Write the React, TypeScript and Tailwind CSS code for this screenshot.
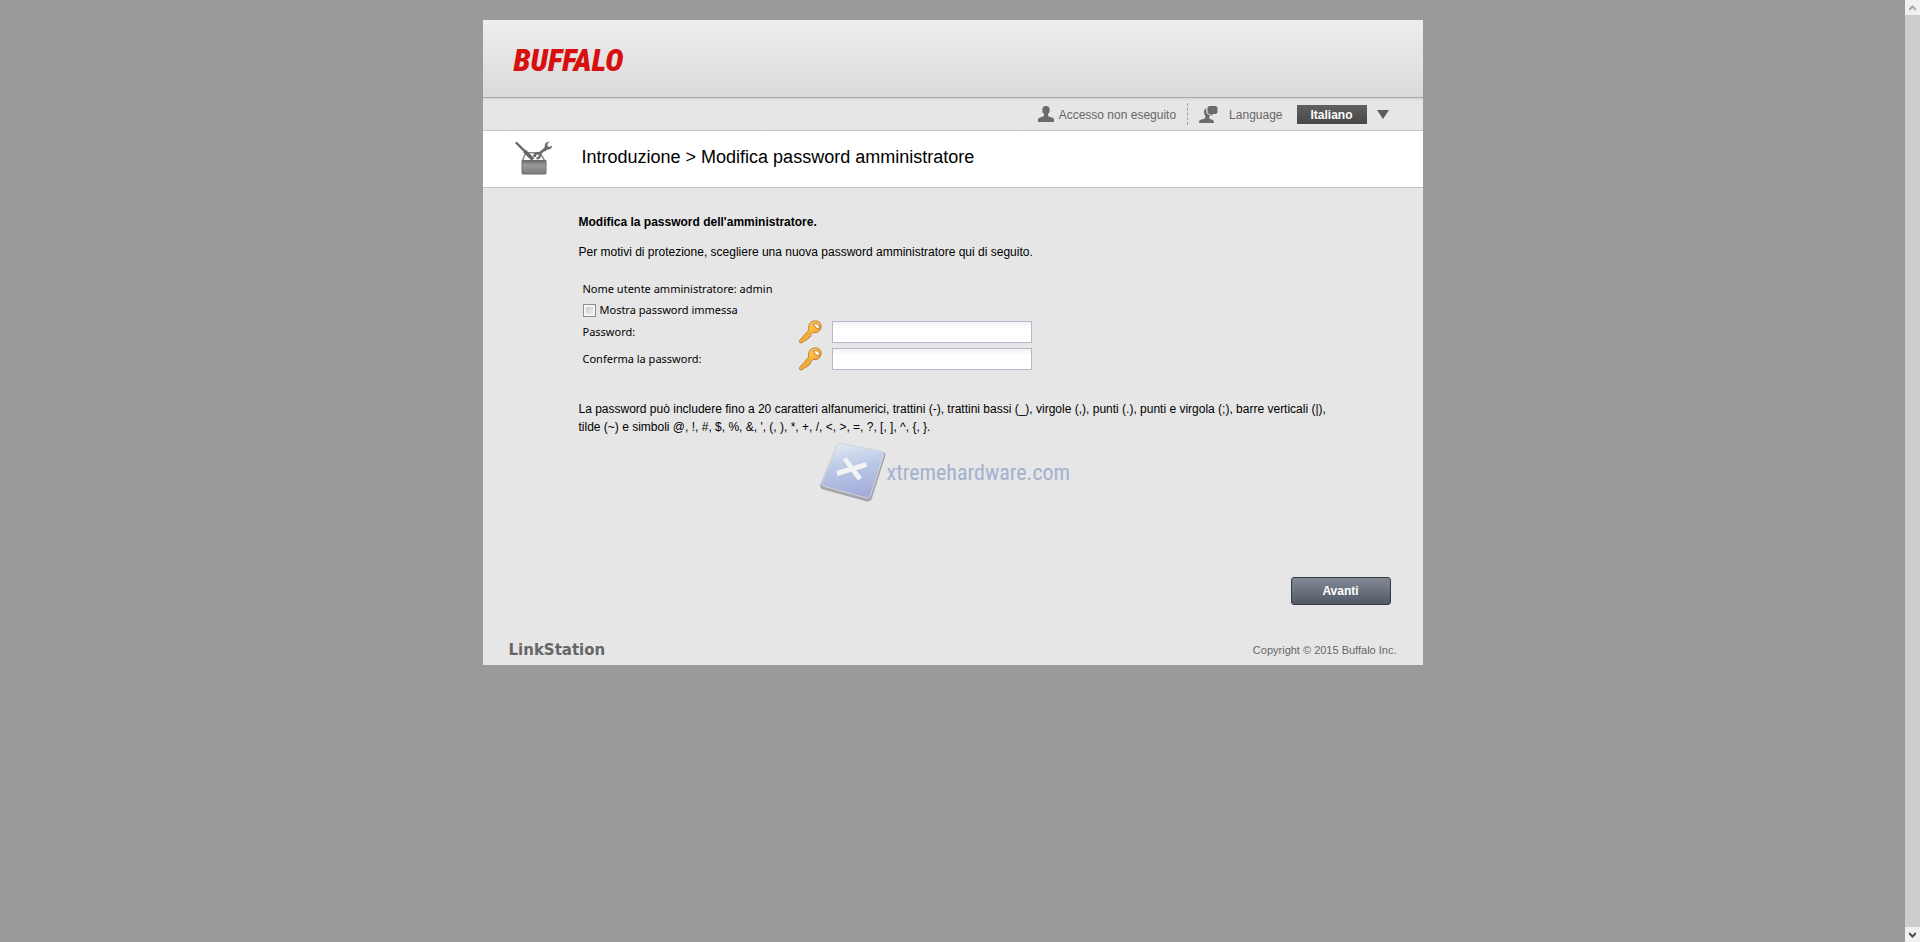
import { useState } from "react";

const languages = ["Italiano", "English", "Deutsch", "Français", "Español"];

const passwordHint =
  "La password può includere fino a 20 caratteri alfanumerici, trattini (-), trattini bassi (_), virgole (,), punti (.), punti e virgola (;), barre verticali (|), tilde (~) e simboli @, !, #, $, %, &, ', (, ), *, +, /, <, >, =, ?, [, ], ^, {, }.";

function UserIcon() {
  return (
    <svg width="16" height="16" viewBox="0 0 16 16" fill="#6b6b6b" aria-hidden="true">
      <path d="M8 0C5.600 0 4.300 1.500 4.300 3.800c0 1.900.5 3.200 1.700 4.300v1.400c0 .6-.4.900-1 1.100L1.500 11.700C.5 12.100 0 12.700 0 13.700V16h16v-2.300c0-1-.5-1.600-1.500-2L11 10.600c-.6-.2-1-.5-1-1.100V8.100c1.200-1.100 1.700-2.400 1.700-4.300C11.700 1.500 10.400 0 8 0z" />
    </svg>
  );
}

function LanguageIcon() {
  return (
    <svg width="19" height="17" viewBox="0 0 19 17" fill="#6b6b6b" aria-hidden="true">
      <path d="M10 0h7l1.500 1.500v5L17 8h-3l-2 2-.5-2H10L8.500 6.500v-5z" />
      <path d="M7.300 2.200C5.300 3 4.800 4.600 5 6.600c.1 1.500.6 2.700 1.400 3.700 0 1.400-.2 2-1.200 2.400l-3.600 1.100C.5 14.200 0 14.800 0 17h15c0-2-.5-2.700-1.500-3.100l-2.300-.9c-.8-.3-1-.8-.8-1.900l.5-2.300C8.500 8.700 7.200 7.300 7.200 5z" />
    </svg>
  );
}

function ToolboxIcon() {
  return (
    <svg width="38" height="34" viewBox="0 0 38 34" aria-hidden="true">
      <defs>
        <linearGradient id="box" x1="0" y1="0" x2="0" y2="1">
          <stop offset="0" stopColor="#6c6c6c" />
          <stop offset=".35" stopColor="#999" />
          <stop offset="1" stopColor="#7c7c7c" />
        </linearGradient>
      </defs>
      <path d="M7.500 19.500l2.500-6c.5-1.200 1-1.700 2-1.700h12c1 0 1.500.5 2 1.700l3.500 6" fill="none" stroke="#8a8a8a" strokeWidth="1.500" />
      <path d="M1.500 2l9 9" stroke="#666" strokeWidth="2.400" strokeLinecap="round" />
      <path d="M9.500 10l8.500 8.500" stroke="#666" strokeWidth="3.800" />
      <path d="M19.500 16c0-3 2-4.500 5-3.500l5-4" fill="none" stroke="#6c6c6c" strokeWidth="2.800" />
      <path d="M34.500.8c-3.500 0-5.200 2.200-4.600 5l-2 2.500 2.200 2.200 2.300-1.900c2.500.4 4.400-1.100 4.900-4.300L34.600 6 32.400 5l.2-2.200z" fill="#6c6c6c" />
      <path d="M24.500 12.500c1.500 2.500 0 4.500-3 5" fill="none" stroke="#6c6c6c" strokeWidth="2.400" />
      <path d="M7 19.500h24V32c0 .8-.4 1-1 1H8c-.6 0-1-.2-1-1z" fill="url(#box)" stroke="#6c6c6c" />
    </svg>
  );
}

function KeyIcon() {
  return (
    <svg width="24" height="24" viewBox="0 0 24 24" aria-hidden="true">
      <defs>
        <linearGradient id="gold" x1="0" y1="0" x2="1" y2="1">
          <stop offset="0" stopColor="#ffdc86" />
          <stop offset=".5" stopColor="#fbb93f" />
          <stop offset="1" stopColor="#e58f1c" />
        </linearGradient>
      </defs>
      <path
        d="M12.500 1.800C14.500.6 18.500.5 20.500 2.300c2 1.900 2.100 5.200.6 7.600-1.500 2.300-4.400 3.300-7.100 2.500L11.600 15l.1 1.500-1.700.2-.2 1.700-1.700.1-.3 1.600-1.600.2L2.800 23 .8 22.600l-.3-2.100 9.200-10.400C8.900 7 10 3.400 12.500 1.800z"
        fill="url(#gold)"
        stroke="#c4802e"
      />
      <path d="M2 21.500l9.500-10.500" stroke="#d99434" />
      <path d="M14 3.800h4l2.200 2v3.400l-3-1.200z" fill="#fff" stroke="#c4802e" />
    </svg>
  );
}

function WatermarkIcon() {
  return (
    <svg width="68" height="62" viewBox="0 0 68 62" aria-hidden="true">
      <defs>
        <linearGradient id="tile" x1=".3" y1="0" x2=".5" y2="1">
          <stop offset="0" stopColor="#e0e8f2" />
          <stop offset=".45" stopColor="#b9c8e6" />
          <stop offset="1" stopColor="#a3aada" />
        </linearGradient>
      </defs>
      <path d="M23 2.500l40 8c3 .7 4 2.500 3.200 5L53 57c-1 3-3 4-6 3.300L4.500 48.500C1.500 47.500.5 46 1.500 43L17 6c1-2.800 3-4 6-3.500z" fill="#a4a6ab" />
      <path d="M22.500 2.500l39 7.500c2.500.6 3.700 2 3 4.500L51.500 54c-.8 2.400-2.500 3.300-5 2.700L5.500 45.500c-2.500-.8-3.500-2.200-2.600-4.500L17.500 5.500c.9-2.300 2.700-3.400 5-3z" fill="url(#tile)" stroke="#d2d5da" />
      <path d="M25.500 18.500L41 38.500M18.500 33.500L47.500 24.500" stroke="#b4bdd3" strokeWidth="6" />
      <path d="M25.500 17.500L41 38M18 32.500L47.500 23.500" stroke="#f2f3f6" strokeWidth="5" />
    </svg>
  );
}

type PasswordRowProps = {
  id: string;
  label: string;
  visible: boolean;
};

function PasswordRow({ id, label, visible }: PasswordRowProps) {
  return (
    <div className="flex h-6 items-center">
      <label htmlFor={id} className="w-54">
        {label}
      </label>
      <KeyIcon />
      <input
        id={id}
        type={visible ? "text" : "password"}
        className="ml-[9px] h-[22px] w-50 border border-[#b5b8c8] bg-linear-to-b from-[#f0f1f4] to-white to-30% px-1 outline-none"
      />
    </div>
  );
}

function Scrollbar() {
  return (
    <div className="sticky top-0 flex h-screen w-[15px] shrink-0 flex-col justify-between bg-[#cdcdcd]" aria-hidden="true">
      <div className="flex h-[15px] items-center justify-center bg-[#f1f1f1]">
        <svg width="7" height="6" viewBox="0 0 7 6" fill="none" stroke="#a8a8a8" strokeWidth="2">
          <path d="M0 5l3.500-3.500L7 5" />
        </svg>
      </div>
      <div className="flex h-[15px] items-center justify-center bg-[#f1f1f1]">
        <svg width="7" height="6" viewBox="0 0 7 6" fill="none" stroke="#505050" strokeWidth="2">
          <path d="M0 1l3.500 3.500L7 1" />
        </svg>
      </div>
    </div>
  );
}

export default function App() {
  const [showPassword, setShowPassword] = useState(false);

  return (
    <div className="flex min-h-screen bg-[#9a9a9a] font-['Liberation_Sans',Arial,sans-serif] text-xs text-black">
      <div className="flex-1 pt-5">
        <div className="mx-auto w-full max-w-[940px] bg-[#e6e6e6]">
          <header className="flex h-[78px] items-center border-b border-[#a8a8a8] bg-linear-to-b from-[#eeeeee] to-[#dadada] px-[31px]">
            <div className="pt-1 font-['Roboto_Condensed','Roboto',sans-serif] text-[31px] leading-8 font-black text-[#d7100f] italic">
              BUFFALO
            </div>
          </header>

          <div className="flex h-[33px] items-center justify-end border-b border-[#c4c4c4] bg-linear-to-b from-[#d6d6d6] to-[#e6e6e6] to-10% pr-[34px] text-[#666666]">
            <UserIcon />
            <span className="mr-[11px] ml-[5px] pt-px">Accesso non eseguito</span>
            <div className="mr-[11px] h-[22px] border-l border-dashed border-[#a0a0a0]" />
            <LanguageIcon />
            <label htmlFor="language" className="ml-[11px] pt-px">
              Language
            </label>
            <select
              id="language"
              className="ml-[14px] h-[19px] w-[70px] appearance-none bg-linear-to-b from-[#606060] to-[#484848] pt-px text-center font-bold text-white"
            >
              {languages.map((name) => (
                <option key={name}>{name}</option>
              ))}
            </select>
            <svg className="ml-[10px]" width="12" height="9" viewBox="0 0 12 9" fill="#5c5c5c" aria-hidden="true">
              <path d="M0 0h12L6 9z" />
            </svg>
          </div>

          <div className="flex h-[57px] items-center border-b border-[#c4c4c4] bg-white px-8 pb-0.5">
            <ToolboxIcon />
            <h1 className="ml-[29px] pb-0.5 text-lg leading-6">Introduzione &gt; Modifica password amministratore</h1>
          </div>

          <main className="pt-[25px] pr-8 pl-24 leading-[18px]">
            <h2 className="font-bold">Modifica la password dell'amministratore.</h2>
            <p className="mt-3">Per motivi di protezione, scegliere una nuova password amministratore qui di seguito.</p>

            <form className="mt-[17px] pl-1 font-['Noto_Sans',Tahoma,sans-serif] text-[11px]">
              <div className="flex h-[22px] items-center">Nome utente amministratore: admin</div>
              <label className="flex h-5 items-center gap-1">
                <input
                  type="checkbox"
                  checked={showPassword}
                  onChange={(e) => setShowPassword(e.target.checked)}
                  className="size-[13px] appearance-none border border-[#8e8f8f] bg-linear-to-br from-[#c4c7cc] to-[#f4f4f4] shadow-[inset_0_0_0_2px_#f4f4f4] checked:from-[#4a5f97]"
                />
                Mostra password immessa
              </label>
              <div className="flex flex-col gap-[3px]">
                <PasswordRow id="password" label="Password:" visible={showPassword} />
                <PasswordRow id="confirm" label="Conferma la password:" visible={showPassword} />
              </div>
            </form>

            <p className="mt-[29px] max-w-[765px]">{passwordHint}</p>

            <div className="mt-1 flex h-16 items-center pl-60 font-['Roboto_Condensed','Roboto',sans-serif] text-[22px] text-[#a3b1cf]">
              <WatermarkIcon />
              <span className="pt-0.5">xtremehardware.com</span>
            </div>

            <div className="mt-[73px] flex justify-end">
              <button
                type="button"
                className="h-7 w-25 rounded-[3px] border border-[#373b43] bg-linear-to-b from-[#848b97] to-[#515966] font-bold text-white"
              >
                Avanti
              </button>
            </div>
          </main>

          <footer className="mt-[35px] flex items-center justify-between pr-[26px] pb-[5px] pl-[26px] text-[11px] leading-5 text-[#666666]">
            <div className="font-['DejaVu_Sans',sans-serif] text-[15px] font-bold">LinkStation</div>
            <div>Copyright © 2015 Buffalo Inc.</div>
          </footer>
        </div>
      </div>
      <Scrollbar />
    </div>
  );
}
